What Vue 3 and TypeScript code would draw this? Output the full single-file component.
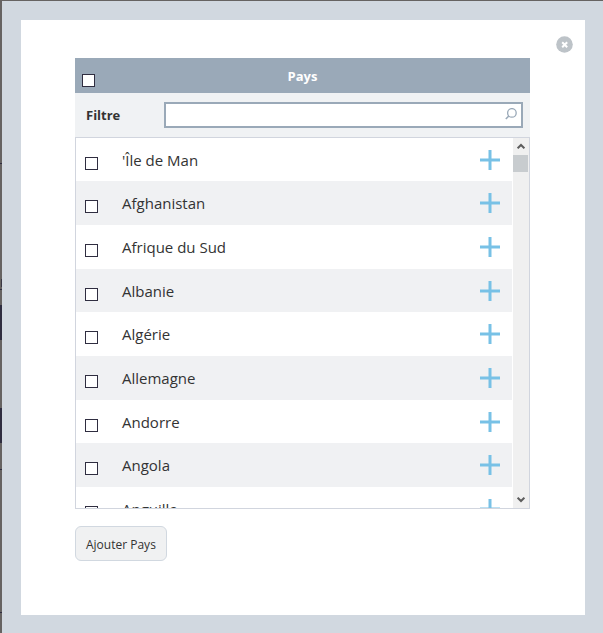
<script setup lang="ts">
import { computed, ref } from 'vue'

const countries: string[] = [
  "'Île de Man",
  'Afghanistan',
  'Afrique du Sud',
  'Albanie',
  'Algérie',
  'Allemagne',
  'Andorre',
  'Angola',
  'Anguilla',
]

const filter = ref('')
const selected = ref<string[]>([])
const list = ref<HTMLElement | null>(null)

const visible = computed(() =>
  countries.filter((name) => name.toLowerCase().includes(filter.value.toLowerCase())),
)

const allSelected = computed({
  get: () => selected.value.length === countries.length,
  set: (on: boolean) => {
    selected.value = on ? [...countries] : []
  },
})

function add(name: string) {
  if (!selected.value.includes(name)) selected.value.push(name)
}

function scroll(step: number) {
  list.value?.scrollBy({ top: step })
}
</script>

<template>
  <div class="backdrop">
    <div class="frame">
      <main class="dialog">
        <button class="close" type="button" aria-label="Fermer">
          <svg viewBox="0 0 17 17" width="17" height="17">
            <circle cx="8.5" cy="8.5" r="8.3" fill="#bdc3c8" />
            <path d="M6.2 6.2l5 5M11.2 6.2l-5 5" stroke="#fff" stroke-width="2" />
          </svg>
        </button>

        <section class="picker">
          <header class="head">
            <input v-model="allSelected" class="check" type="checkbox" aria-label="Pays" />
            <h1 class="title">Pays</h1>
          </header>

          <div class="filter">
            <label class="filter-label" for="filter">Filtre</label>
            <div class="search">
              <input id="filter" v-model="filter" class="search-input" type="text" />
              <svg class="glass" viewBox="0 0 12 12" width="12" height="12">
                <circle cx="6.9" cy="4.9" r="4.3" fill="none" stroke="#9aa9b8" stroke-width="1.3" />
                <path d="M3.8 8L.8 11" stroke="#9aa9b8" stroke-width="1.6" />
              </svg>
            </div>
          </div>

          <div class="box">
            <ul ref="list" class="list">
              <li v-for="(name, i) in visible" :key="name" class="row">
                <input :id="`c${i}`" v-model="selected" class="check" type="checkbox" :value="name" />
                <label class="name" :for="`c${i}`">{{ name }}</label>
                <button class="plus" type="button" :aria-label="name" @click="add(name)">
                  <svg viewBox="0 0 20 20" width="20" height="20">
                    <path d="M0 10h20M10 0v20" stroke="#78c1e6" stroke-width="3" />
                  </svg>
                </button>
              </li>
            </ul>
            <div class="bar">
              <button class="arrow" type="button" aria-label="Haut" @click="scroll(-44)">
                <svg viewBox="0 0 8 7" width="8" height="7">
                  <path d="M.6 5.4L4 2l3.4 3.4" fill="none" stroke="#5c5c5c" stroke-width="2" />
                </svg>
              </button>
              <div class="thumb"></div>
              <button class="arrow down" type="button" aria-label="Bas" @click="scroll(44)">
                <svg viewBox="0 0 8 7" width="8" height="7">
                  <path d="M.6 1.6L4 5l3.4-3.4" fill="none" stroke="#5c5c5c" stroke-width="2" />
                </svg>
              </button>
            </div>
          </div>
        </section>

        <button class="submit" type="button">Ajouter Pays</button>
      </main>
    </div>
  </div>
</template>

<style>
body {
  margin: 0;
}
</style>

<style scoped>
* {
  box-sizing: border-box;
}

button {
  padding: 0;
  border: 0;
  background: none;
  font: inherit;
  color: inherit;
  cursor: pointer;
}

svg {
  display: block;
}

.backdrop {
  display: flex;
  min-height: 100vh;
  padding: 1px 0 0 2px;
  background:
    linear-gradient(#2f2d40, #2f2d40) 0 163px / 2px 1px no-repeat,
    linear-gradient(#3a3844, #3a3844) 1px 279px / 1px 8px no-repeat,
    linear-gradient(#2f2d40, #2f2d40) 0 289px / 2px 1px no-repeat,
    linear-gradient(#2f2d40, #2f2d40) 0 305px / 2px 35px no-repeat,
    linear-gradient(#2f2d40, #2f2d40) 0 408px / 2px 35px no-repeat,
    linear-gradient(#2f2d40, #2f2d40) 0 469px / 2px 1px no-repeat,
    linear-gradient(#2f2d40, #2f2d40) 0 612px / 2px 1px no-repeat,
    #666362;
  font-family: "Open Sans", "Noto Sans", sans-serif;
  color: #333;
}

.frame {
  display: flex;
  flex: 1;
  padding: 19px 18px 18px 19px;
  background: #d1d8e0;
}

.dialog {
  position: relative;
  flex: 1;
  padding: 38px 55px 54px 54px;
  background: #fff;
}

.close {
  position: absolute;
  top: 16px;
  right: 12px;
}

.head {
  display: grid;
  grid-template-columns: 13px 1fr 13px;
  align-items: center;
  height: 35px;
  padding: 0 7px;
  background: #9aa9b8;
}

.check {
  appearance: none;
  width: 13px;
  height: 13px;
  margin: 0;
  border: 1px solid #2f2d40;
  background: #fff;
}

.check:checked {
  background: #2f2d40;
  box-shadow: inset 0 0 0 2px #fff;
}

.head .check {
  margin-top: 10px;
}

.title {
  margin: 0;
  font-size: 13px;
  line-height: 20px;
  font-weight: 700;
  text-align: center;
  color: #fff;
}

.filter {
  display: flex;
  align-items: center;
  height: 44px;
  padding: 0 7px 0 11px;
  background: #f0f2f4;
}

.filter-label {
  width: 78px;
  font-size: 13px;
  line-height: 20px;
  font-weight: 700;
}

.search {
  display: flex;
  flex: 1;
  height: 26px;
  padding-right: 4px;
  border: 2px solid #9aa9b8;
  background: #fff;
}

.search-input {
  flex: 1;
  min-width: 0;
  padding: 0 6px;
  border: 0;
  outline: 0;
  background: none;
  font: inherit;
  font-size: 13px;
}

.glass {
  margin-top: 4px;
}

.box {
  display: flex;
  height: 372px;
  border: 1px solid #d1d5de;
}

.list {
  flex: 1;
  margin: 0 1px 0 0;
  padding: 0;
  overflow-y: auto;
  scrollbar-width: none;
  list-style: none;
}

.row {
  display: flex;
  align-items: center;
  height: 44px;
  padding: 0 12px 0 9px;
}

.row:nth-child(3n + 1) {
  height: 43px;
}

.row:nth-child(even) {
  background: #f0f1f3;
}

.row .check {
  margin-top: 7px;
}

.name {
  flex: 1;
  padding-left: 24px;
  font-size: 15px;
  line-height: 20px;
}

.bar {
  display: flex;
  flex-direction: column;
  width: 16px;
  background: #f0f0f0;
}

.arrow {
  display: grid;
  place-items: center;
  width: 15px;
  height: 17px;
}

.thumb {
  width: 15px;
  height: 17px;
  background: #c8cccf;
}

.down {
  margin-top: auto;
}

.submit {
  height: 35px;
  margin-top: 17px;
  padding: 2px 10px 0;
  border: 1px solid #d1d8e0;
  border-radius: 6px;
  background: #f0f1f2;
  font-size: 12px;
}
</style>
